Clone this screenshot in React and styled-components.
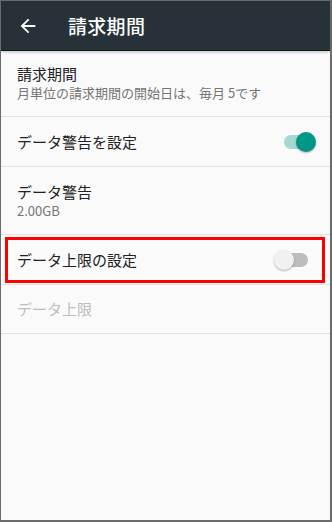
import React from 'react'
import styled, { createGlobalStyle } from 'styled-components'

const GlobalStyle = createGlobalStyle`
  html, body {
    margin: 0;
    padding: 0;
    background: #fafafa;
  }
  * { box-sizing: border-box; }
`

const Frame = styled.div`
  width: 332px;
  height: 522px;
  border-style: solid;
  border-color: #6b6b6b;
  border-width: 1px 2px 2px 1px;
  background: #fafafa;
  font-family: "Noto Sans CJK JP", Roboto, "Noto Sans", sans-serif;
  overflow: hidden;
`

const Toolbar = styled.div`
  height: 49px;
  background: #263238;
  display: flex;
  align-items: center;
  padding-left: 15px;
  box-shadow: 0 1px 0 #10181c, 0 2px 3px rgba(0, 0, 0, 0.25);
  position: relative;
  z-index: 1;
`

const BackButton = styled.div`
  width: 24px;
  height: 24px;
  display: flex;
  align-items: center;
  justify-content: center;
  margin-right: 28px;
`

const ToolbarTitle = styled.div`
  color: #ffffff;
  font-size: 19px;
  font-weight: 500;
  letter-spacing: 0.3px;
`

const List = styled.div`
  display: flex;
  flex-direction: column;
`

const Row = styled.div`
  position: relative;
  height: ${(p) => p.h}px;
  border-bottom: 1px solid #e2e2e2;
  display: flex;
  align-items: center;
  justify-content: space-between;
  padding: 0 22px 0 16px;
`

const TextBlock = styled.div`
  display: flex;
  flex-direction: column;
`

const Title = styled.div`
  font-size: 15px;
  line-height: 20px;
  color: ${(p) => (p.disabled ? '#bdbdbd' : '#212121')};
`

const Summary = styled.div`
  font-size: 13px;
  line-height: 18px;
  color: #757575;
`

const Track = styled.div`
  position: relative;
  width: 24px;
  height: 14px;
  border-radius: 7px;
  background: ${(p) => (p.on ? '#a3d9d3' : '#bdbdbd')};
  margin-right: 0;
`

const Thumb = styled.div`
  position: absolute;
  top: -3px;
  left: ${(p) => (p.on ? '12px' : '-10px')};
  width: 20px;
  height: 20px;
  border-radius: 50%;
  background: ${(p) => (p.on ? '#009688' : '#f1f1f1')};
  box-shadow: 0 1px 2px rgba(0, 0, 0, 0.3);
`

const Highlight = styled.div`
  position: absolute;
  top: 2px;
  bottom: 1px;
  left: 4px;
  right: 5px;
  border: 3px solid #ff0000;
  pointer-events: none;
`

const Switch = ({ on }) => (
  <Track on={on ? 1 : 0}>
    <Thumb on={on ? 1 : 0} />
  </Track>
)

const ArrowBack = () => (
  <svg width="22" height="22" viewBox="0 0 24 24">
    <path fill="#ffffff" d="M20 11H7.83l5.59-5.59L12 4l-8 8 8 8 1.41-1.41L7.83 13H20v-2z" />
  </svg>
)

const App = () => {
  return (
    <>
      <GlobalStyle />
      <Frame>
        <Toolbar>
          <BackButton>
            <ArrowBack />
          </BackButton>
          <ToolbarTitle>請求期間</ToolbarTitle>
        </Toolbar>
        <List>
          <Row h={67}>
            <TextBlock>
              <Title>請求期間</Title>
              <Summary>月単位の請求期間の開始日は、毎月 5です</Summary>
            </TextBlock>
          </Row>
          <Row h={50}>
            <Title>データ警告を設定</Title>
            <Switch on />
          </Row>
          <Row h={68}>
            <TextBlock>
              <Title>データ警告</Title>
              <Summary>2.00GB</Summary>
            </TextBlock>
          </Row>
          <Row h={50}>
            <Title>データ上限の設定</Title>
            <Switch />
            <Highlight />
          </Row>
          <Row h={49}>
            <Title disabled>データ上限</Title>
          </Row>
        </List>
      </Frame>
    </>
  )
}

export default App
